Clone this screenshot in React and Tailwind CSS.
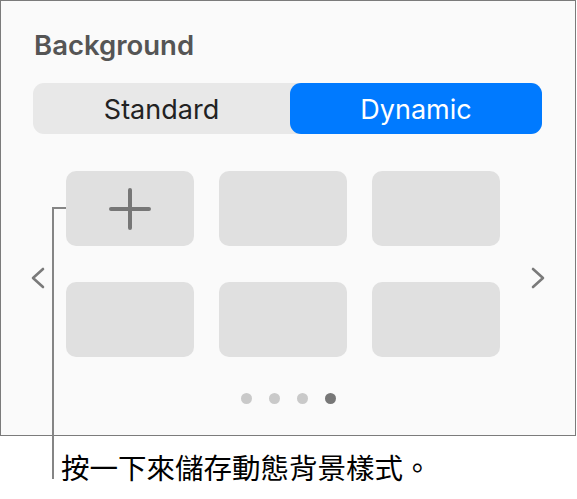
import React from 'react';

const sans = "font-['Inter','Liberation_Sans',sans-serif]";

function Chevron({ dir }) {
  const pts = dir === 'left' ? '12,2 2,11 12,20' : '2,2 12,11 2,20';
  return (
    <svg width="14" height="22" viewBox="0 0 14 22" className="mt-[96px] shrink-0">
      <polyline points={pts} fill="none" stroke="#7a7a7a" strokeWidth="2.6" strokeLinecap="round" strokeLinejoin="round" />
    </svg>
  );
}

function Tile({ children }) {
  return (
    <div className="h-[75px] rounded-[10px] bg-[#e0e0e0] flex items-center justify-center">
      {children}
    </div>
  );
}

export default function App() {
  return (
    <div className="relative w-[577px] h-[499px] bg-white overflow-hidden">
      <div className="w-[576px] h-[436px] border border-[#7b7b7b] bg-[#fafafa] pt-[28px]">
        <h2 className={`${sans} ml-[33px] text-[27.5px] leading-[32px] font-semibold text-[#555555]`}>
          Background
        </h2>

        {/* segmented control */}
        <div className={`${sans} mt-[22px] ml-[32px] w-[509px] h-[51px] rounded-[11px] bg-[#e8e8e8] flex text-[27px] leading-[32px]`}>
          <div className="flex-1 flex items-center justify-center pt-[2px] text-[#222222]">Standard</div>
          <div className="w-[252px] rounded-[11px] bg-[#007aff] flex items-center justify-center pt-[2px] text-white">
            Dynamic
          </div>
        </div>

        <div className="mt-[37px] ml-[30px] flex items-start">
          <Chevron dir="left" />
          <div className="ml-[21px] grid grid-cols-[128px_128px_128px] gap-x-[25px] gap-y-[36px]">
            <Tile>
              <svg width="42" height="42" viewBox="0 0 42 42">
                <path d="M21 2v38M2 21h38" stroke="#777777" strokeWidth="4" strokeLinecap="round" />
              </svg>
            </Tile>
            <Tile />
            <Tile />
            <Tile />
            <Tile />
            <Tile />
          </div>
          <div className="ml-[31px]">
            <Chevron dir="right" />
          </div>
        </div>

        <div className="mt-[36px] flex justify-center gap-[17px] pl-[1px]">
          <span className="w-[11px] h-[11px] rounded-full bg-[#c9c9c9]" />
          <span className="w-[11px] h-[11px] rounded-full bg-[#c9c9c9]" />
          <span className="w-[11px] h-[11px] rounded-full bg-[#c9c9c9]" />
          <span className="w-[11px] h-[11px] rounded-full bg-[#777777]" />
        </div>
      </div>

      <p className="mt-[17px] pl-[61px] text-[28.5px] leading-[28px] text-black font-['Noto_Sans_CJK_TC','Noto_Sans_CJK_SC',sans-serif]">
        按一下來儲存動態背景樣式。
      </p>

      {/* callout line */}
      <div className="absolute left-[52px] top-[207px] w-[14px] h-[2px] bg-[#858585]" />
      <div className="absolute left-[52px] top-[207px] w-[2px] h-[272px] bg-[#858585]" />
    </div>
  );
}
